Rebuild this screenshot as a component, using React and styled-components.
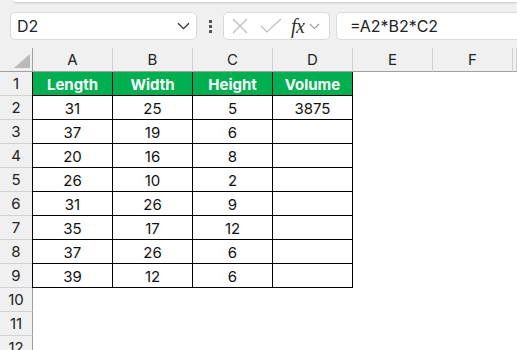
import React from "react";
import styled, { createGlobalStyle } from "styled-components";

const Global = createGlobalStyle`
  html, body { margin: 0; padding: 0; background: #f0f0f0; }
  body { font-family: "Inter", "Liberation Sans", sans-serif; width: 517px; height: 350px; overflow: hidden; }
`;

const Page = styled.div`
  width: 517px;
  height: 350px;
  overflow: hidden;
  background: #f0f0f0;
  display: flex;
  flex-direction: column;
`;

const Ribbon = styled.div`
  flex-shrink: 0;
  height: 2px;
  margin-left: 14px;
  background: #fff;
  border-bottom-left-radius: 4px;
  box-shadow: 0 1px 2px rgba(0,0,0,0.18);
`;

const FormulaBar = styled.div`
  flex-shrink: 0;
  height: 46px;
  display: flex;
  align-items: flex-start;
  padding-top: 10px;
  box-sizing: border-box;
  padding-left: 10px;
`;

const Box = styled.div`
  height: 28px;
  box-sizing: border-box;
  background: #fff;
  border: 1px solid #dadada;
  border-radius: 5px;
  display: flex;
  align-items: center;
`;

const NameBox = styled(Box)`
  width: 187px;
  padding: 0 6px 0 6px;
  justify-content: space-between;
  font-size: 16px;
  color: #222;
`;

const Dots = styled.div`
  width: 26px;
  height: 28px;
  display: flex;
  flex-direction: column;
  align-items: center;
  justify-content: center;
  gap: 2px;
`;

const Dot = styled.span`
  width: 3px;
  height: 3px;
  background: #555;
`;

const Buttons = styled(Box)`
  width: 107px;
  padding-left: 8px;
  gap: 0;
`;

const Fx = styled.span`
  font-family: "Liberation Serif", "DejaVu Serif", serif;
  font-style: italic;
  font-size: 20px;
  color: #333;
  margin-left: 9px;
  letter-spacing: -0.5px;
  line-height: 1;
`;

const Input = styled(Box)`
  flex: 1;
  margin-left: 6px;
  border-right: none;
  border-top-right-radius: 0;
  border-bottom-right-radius: 0;
  padding-left: 13px;
  font-size: 16px;
  color: #222;
`;

const Sheet = styled.div`
  flex: 1;
  min-height: 0;
  overflow: hidden;
  background: #fff;
  display: grid;
  grid-template-columns: 33px repeat(6, 80px) 1fr;
  grid-auto-rows: 24px;
  align-content: start;
`;

const Corner = styled.div`
  position: relative;
  background: #f0f0f0;
  border-right: 1px solid #a0a0a0;
  border-bottom: 1px solid #a0a0a0;
  box-sizing: border-box;
`;

const Tri = styled.svg`
  position: absolute;
  right: 2px;
  bottom: 3px;
`;

const ColHead = styled.div`
  background: #f0f0f0;
  border-right: 1px solid #d0d0d0;
  border-bottom: 1px solid #a0a0a0;
  box-sizing: border-box;
  display: flex;
  align-items: center;
  justify-content: center;
  font-size: 15px;
  color: #222;
`;

const RowHead = styled.div`
  background: #f0f0f0;
  border-right: 1px solid #a0a0a0;
  border-bottom: 1px solid #d0d0d0;
  box-sizing: border-box;
  display: flex;
  align-items: center;
  justify-content: center;
  font-size: 15px;
  color: #222;
`;

const Cell = styled.div`
  box-sizing: border-box;
  display: flex;
  align-items: center;
  justify-content: center;
  font-size: 15px;
  color: #111;
  border-right: 1px solid ${p => (p.$table ? "#000" : "transparent")};
  border-bottom: 1px solid ${p => (p.$table ? "#000" : "transparent")};
  ${p => p.$tableLeft && "border-left: 1px solid #000; margin-left: -1px;"}
  ${p => p.$head && "background: #00b050; color: #fff; font-weight: 700;"}
  padding-top: 1px;
`;

const Chevron = ({ size = 12, color = "#444" }) => (
  <svg width={size} height={size * 0.6} viewBox="0 0 12 7">
    <path d="M1 1 L6 6 L11 1" fill="none" stroke={color} strokeWidth="1.2" />
  </svg>
);

const data = [
  [31, 25, 5, 3875],
  [37, 19, 6, ""],
  [20, 16, 8, ""],
  [26, 10, 2, ""],
  [31, 26, 9, ""],
  [35, 17, 12, ""],
  [37, 26, 6, ""],
  [39, 12, 6, ""],
];

export default function App() {
  const cols = ["A", "B", "C", "D", "E", "F", ""];
  const rows = [];
  for (let r = 1; r <= 12; r++) {
    const cells = [];
    for (let c = 0; c < 7; c++) {
      let content = "";
      let table = false;
      let head = false;
      if (c < 4 && r <= 9) {
        table = true;
        if (r === 1) {
          head = true;
          content = ["Length", "Width", "Height", "Volume"][c];
        } else {
          content = data[r - 2][c];
        }
      }
      cells.push(
        <Cell key={c} $table={table} $head={head} $tableLeft={table && c === 0}>
          {content}
        </Cell>
      );
    }
    rows.push(
      <React.Fragment key={r}>
        <RowHead>{r}</RowHead>
        {cells}
      </React.Fragment>
    );
  }
  return (
    <Page>
      <Global />
      <Ribbon />
      <FormulaBar>
        <NameBox>
          <span>D2</span>
          <Chevron size={13} color="#333" />
        </NameBox>
        <Dots>
          <Dot />
          <Dot />
          <Dot />
        </Dots>
        <Buttons>
          <svg width="16" height="16" viewBox="0 0 16 16">
            <path d="M1 1 L15 15 M15 1 L1 15" stroke="#bdbdbd" strokeWidth="1.2" fill="none" />
          </svg>
          <svg width="22" height="16" viewBox="0 0 22 16" style={{ marginLeft: 12 }}>
            <path d="M1 8 L7 14 L21 1" stroke="#bdbdbd" strokeWidth="1.2" fill="none" />
          </svg>
          <Fx>fx</Fx>
          <span style={{ marginLeft: 5, display: "flex" }}>
            <Chevron size={11} color="#999" />
          </span>
        </Buttons>
        <Input>=A2*B2*C2</Input>
      </FormulaBar>
      <Sheet>
        <Corner>
          <Tri width="16" height="14" viewBox="0 0 16 14">
            <polygon points="16,0 16,14 0,14" fill="#b9b9b9" />
          </Tri>
        </Corner>
        {cols.map((c, i) => (
          <ColHead key={i}>{c}</ColHead>
        ))}
        {rows}
      </Sheet>
    </Page>
  );
}
